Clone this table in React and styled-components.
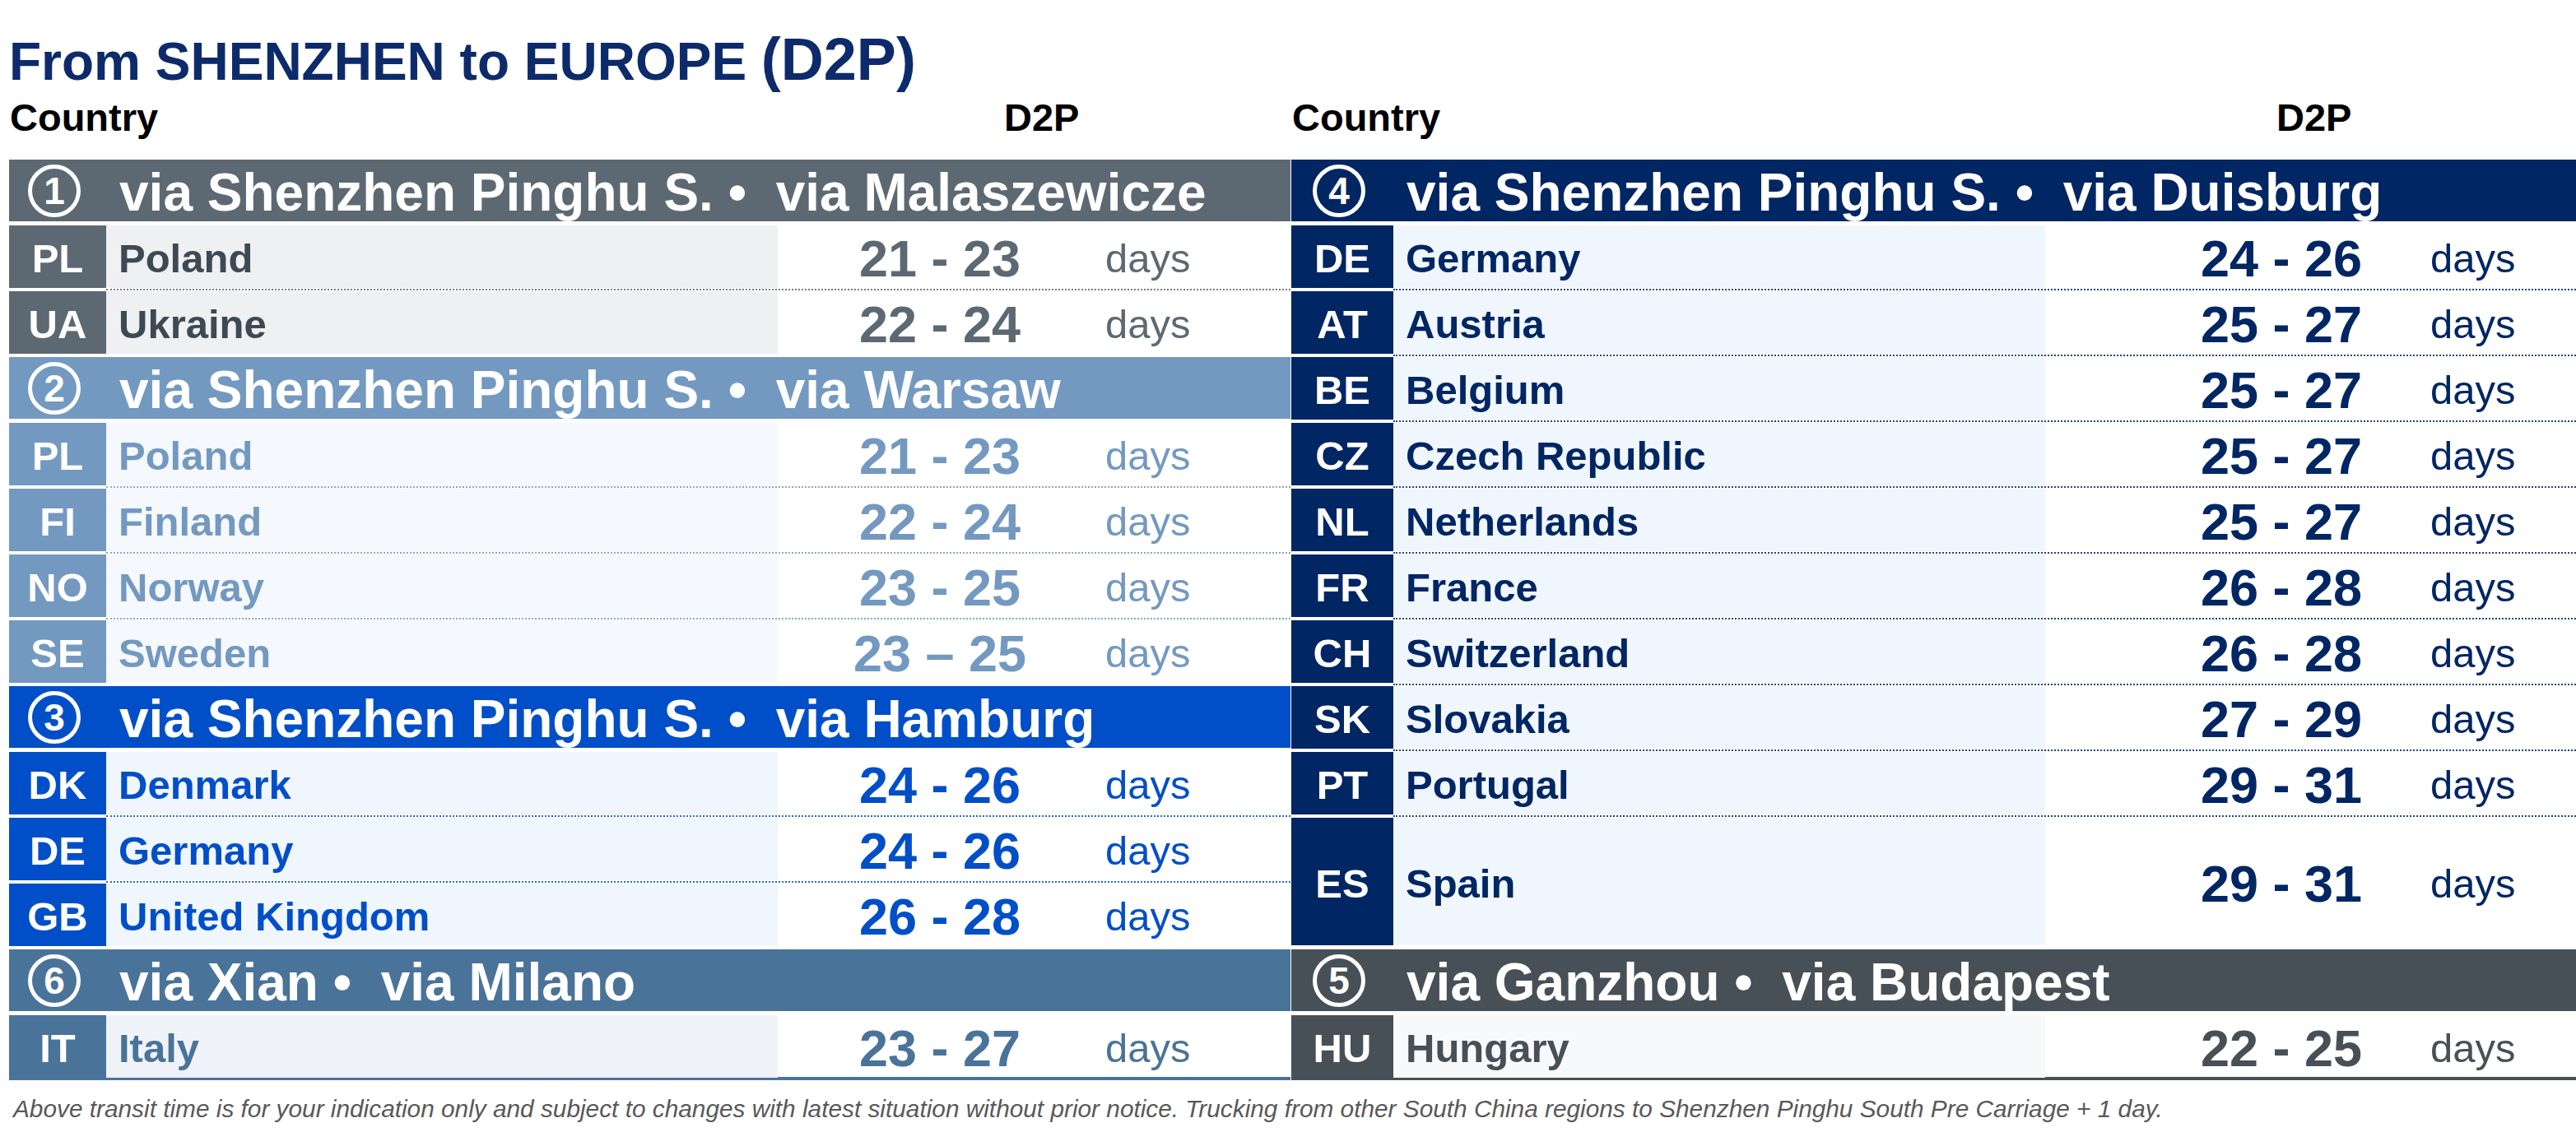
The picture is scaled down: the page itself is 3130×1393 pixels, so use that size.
import styled, { createGlobalStyle } from "styled-components";

const GlobalStyle = createGlobalStyle`
  html, body {
    margin: 0;
    padding: 0;
    background: #fff;
    overflow: hidden;
  }
  body {
    font-family: "Liberation Sans", Arial, sans-serif;
  }
`;

const leftGroups = [
  {
    n: "1",
    from: "via Shenzhen Pinghu S.",
    via: "via Malaszewicze",
    color: "#5d6972",
    text: "#3e4953",
    bg: "#eef0f2",
    rows: [
      ["PL", "Poland", "21 - 23"],
      ["UA", "Ukraine", "22 - 24"],
    ],
  },
  {
    n: "2",
    from: "via Shenzhen Pinghu S.",
    via: "via Warsaw",
    color: "#7399c1",
    text: "#7399c1",
    bg: "#f5f8fc",
    rows: [
      ["PL", "Poland", "21 - 23"],
      ["FI", "Finland", "22 - 24"],
      ["NO", "Norway", "23 - 25"],
      ["SE", "Sweden", "23 – 25"],
    ],
  },
  {
    n: "3",
    from: "via Shenzhen Pinghu S.",
    via: "via Hamburg",
    color: "#004fc8",
    text: "#004fc8",
    bg: "#f0f6fd",
    rows: [
      ["DK", "Denmark", "24 - 26"],
      ["DE", "Germany", "24 - 26"],
      ["GB", "United Kingdom", "26 - 28"],
    ],
  },
  {
    n: "6",
    from: "via Xian",
    via: "via Milano",
    color: "#4a7399",
    text: "#4a7399",
    bg: "#eff3f8",
    rows: [["IT", "Italy", "23 - 27"]],
  },
];

const rightGroups = [
  {
    n: "4",
    from: "via Shenzhen Pinghu S.",
    via: "via Duisburg",
    color: "#002663",
    text: "#002663",
    bg: "#f0f6fe",
    rows: [
      ["DE", "Germany", "24 - 26"],
      ["AT", "Austria", "25 - 27"],
      ["BE", "Belgium", "25 - 27"],
      ["CZ", "Czech Republic", "25 - 27"],
      ["NL", "Netherlands", "25 - 27"],
      ["FR", "France", "26 - 28"],
      ["CH", "Switzerland", "26 - 28"],
      ["SK", "Slovakia", "27 - 29"],
      ["PT", "Portugal", "29 - 31"],
      ["ES", "Spain", "29 - 31", 2],
    ],
  },
  {
    n: "5",
    from: "via Ganzhou",
    via: "via Budapest",
    color: "#475057",
    text: "#475057",
    bg: "#f7f9fb",
    rows: [["HU", "Hungary", "22 - 25"]],
  },
];

const leftLayout = { width: 1557, code: 118, name: 816, num: 394, numPad: 0, daysPad: 4, d2p: 1208 };
const rightLayout = { width: 1561, code: 124, name: 792, num: 440, numPad: 134, daysPad: 28, d2p: 1196 };

function RouteTable({ groups, layout }) {
  const lastGroup = groups.length - 1;
  return (
    <Table $width={layout.width}>
      <ColHead $d2p={layout.d2p}>
        <span>Country</span>
        <span>D2P</span>
      </ColHead>

      {groups.map((g, gi) => (
        <div key={g.n}>
          <Header $color={g.color}>
            <Badge $w={layout.code}>
              <Circle>{g.n}</Circle>
            </Badge>
            <HeaderText>
              {g.from} •  {g.via}
            </HeaderText>
          </Header>
          <Gap />

          {g.rows.map(([code, name, range, span = 1], ri) => {
            const isLast = ri === g.rows.length - 1;
            return (
              <div key={code + name}>
                <Row $layout={layout} $span={span}>
                  <Code $color={g.color}>{code}</Code>
                  <Name $color={g.text} $bg={g.bg}>
                    {name}
                  </Name>
                  <Num $color={g.color} $pad={layout.numPad}>
                    {range}
                  </Num>
                  <Days $color={g.color} $pad={layout.daysPad}>
                    days
                  </Days>
                </Row>
                {!isLast && <Divider $offset={layout.code} $color={g.color} />}
                {isLast && gi !== lastGroup && <Gap />}
                {isLast && gi === lastGroup && <BottomLine $color={g.color} />}
              </div>
            );
          })}
        </div>
      ))}
    </Table>
  );
}

export default function App() {
  return (
    <>
      <GlobalStyle />
      <Page>
        <Title>
          From SHENZHEN to EUROPE <Big>(D2P)</Big>
        </Title>
        <Tables>
          <RouteTable groups={leftGroups} layout={leftLayout} />
          <RouteTable groups={rightGroups} layout={rightLayout} />
        </Tables>
        <Footer>
          Above transit time is for your indication only and subject to changes with latest situation without prior
          notice. Trucking from other South China regions to Shenzhen Pinghu South Pre Carriage + 1 day.
        </Footer>
      </Page>
    </>
  );
}

const Page = styled.div`
  width: 3130px;
  height: 1393px;
  box-sizing: border-box;
  padding-left: 11px;
  font-family: "Liberation Sans", Arial, sans-serif;
`;

const Title = styled.h1`
  margin: 0;
  height: 119px;
  box-sizing: border-box;
  padding-top: 36px;
  font-size: 64px;
  line-height: 72px;
  font-weight: 700;
  color: #0d2b6b;
  white-space: nowrap;
`;

const Big = styled.span`
  font-size: 72px;
`;

const Tables = styled.div`
  display: flex;
  gap: 1px;
`;

const Table = styled.div`
  width: ${(p) => p.$width}px;
  flex: none;
`;

const ColHead = styled.div`
  display: grid;
  grid-template-columns: ${(p) => p.$d2p}px auto;
  height: 75px;
  font-size: 47px;
  line-height: 47px;
  font-weight: 700;
  color: #000;
  padding-left: 1px;
`;

const Header = styled.div`
  display: flex;
  align-items: center;
  height: 75px;
  background: ${(p) => p.$color};
  color: #fff;
`;

const Badge = styled.div`
  width: ${(p) => p.$w}px;
  flex: none;
  display: flex;
  justify-content: center;
  padding-right: 8px;
  box-sizing: border-box;
`;

const Circle = styled.span`
  width: 64px;
  height: 64px;
  box-sizing: border-box;
  border: 5px solid #fff;
  border-radius: 50%;
  display: flex;
  align-items: center;
  justify-content: center;
  font-size: 46px;
  font-weight: 700;
  line-height: 1;
`;

const HeaderText = styled.div`
  padding: 4px 0 0 16px;
  font-size: 64px;
  font-weight: 700;
  white-space: pre;
`;

const Gap = styled.div`
  height: 5px;
`;

const Row = styled.div`
  display: grid;
  grid-template-columns: ${(p) => `${p.$layout.code}px ${p.$layout.name}px ${p.$layout.num}px 1fr`};
  height: ${(p) => p.$span * 80 - 5}px;
`;

const Cell = styled.div`
  display: flex;
  align-items: center;
  padding-top: 4px;
  box-sizing: border-box;
  white-space: nowrap;
`;

const Code = styled(Cell)`
  justify-content: center;
  background: ${(p) => p.$color};
  color: #fff;
  font-size: 49px;
  font-weight: 700;
`;

const Name = styled(Cell)`
  padding-left: 15px;
  background: ${(p) => p.$bg};
  color: ${(p) => p.$color};
  font-size: 49px;
  font-weight: 700;
`;

const Num = styled(Cell)`
  justify-content: center;
  padding-left: ${(p) => p.$pad}px;
  color: ${(p) => p.$color};
  font-size: 63px;
  font-weight: 700;
`;

const Days = styled(Cell)`
  padding-left: ${(p) => p.$pad}px;
  color: ${(p) => p.$color};
  font-size: 49px;
  font-weight: 400;
`;

const Divider = styled.div`
  height: 5px;
  margin-left: ${(p) => p.$offset}px;
  display: flex;
  align-items: center;

  &::before {
    content: "";
    flex: 1;
    border-top: 2px dotted ${(p) => p.$color};
    opacity: 0.85;
  }
`;

const BottomLine = styled.div`
  height: 4px;
  background: ${(p) => p.$color};
`;

const Footer = styled.div`
  margin-top: 20px;
  padding-left: 5px;
  font-size: 29.8px;
  line-height: 30px;
  font-style: italic;
  color: #595959;
  white-space: nowrap;
`;
